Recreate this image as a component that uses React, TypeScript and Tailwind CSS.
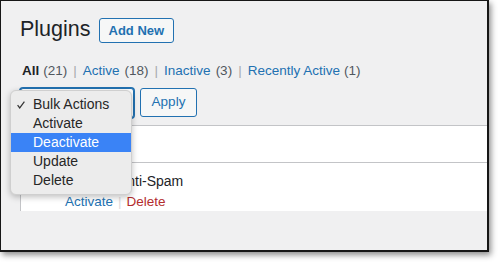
import React from 'react'

const menuItems = ['Bulk Actions', 'Activate', 'Deactivate', 'Update', 'Delete']

function Filters() {
  const sep = <span className="mx-[6px] text-[#a7aaad]">|</span>
  return (
    <div className="mt-[19px] ml-[2px] text-[13.5px] leading-[18px] text-[#50575e] whitespace-nowrap">
      <span className="font-bold text-[#1d2327]">All</span>
      <span className="ml-[4px]">(21)</span>
      {sep}
      <span className="text-[#2271b1]">Active</span>
      <span className="ml-[5px]">(18)</span>
      {sep}
      <span className="text-[#2271b1]">Inactive</span>
      <span className="ml-[5px]">(3)</span>
      {sep}
      <span className="text-[#2271b1]">Recently Active</span>
      <span className="ml-[4px]">(1)</span>
    </div>
  )
}

function BulkMenu() {
  return (
    <div className="absolute left-[9px] top-[88.5px] w-[122px] rounded-[6px] border border-[#cfcfcf] bg-[#ececec] pt-[4px] pb-[4px] shadow-[0_2px_6px_rgba(0,0,0,0.25)] text-[14px]">
      {menuItems.map((item, i) => {
        const active = item === 'Deactivate'
        return (
          <div
            key={item}
            className={`relative flex h-[19px] items-center pl-[22px] ${active ? 'bg-[#3a83f6] text-white' : 'text-[#262626]'}`}
          >
            {i === 0 && (
              <svg className="absolute left-[6px] top-[6.5px]" width="8" height="8" viewBox="0 0 8 8">
                <polyline points="0.6,4.2 2.7,6.9 7.4,0.6" fill="none" stroke="#333" strokeWidth="1.2" />
              </svg>
            )}
            {item}
          </div>
        )
      })}
    </div>
  )
}

export default function App() {
  return (
    <div className="w-[498px] h-[262px] bg-white font-['Liberation_Sans',Arial,sans-serif]">
      <div className="relative w-[489px] h-[252px] overflow-hidden border border-r-2 border-b-2 border-[#161616] bg-[#f0f0f1] pl-[19px] shadow-[2px_3px_6px_rgba(0,0,0,0.45)]">
        {/* title */}
        <div className="mt-[17px] flex h-[25px] items-center">
          <h1 className="-mt-[2px] text-[21.5px] leading-[25px] text-[#1d2327]">Plugins</h1>
          <button className="ml-[8px] h-[25px] rounded-[3px] border border-[#2271b1] bg-[#f6f7f7] px-[9px] text-[13px] font-semibold text-[#2271b1]">
            Add New
          </button>
        </div>

        <Filters />

        {/* bulk actions */}
        <div className="mt-[8px] flex h-[30px] gap-[6px]">
          <div className="h-[30px] w-[114px] rounded-[3px] border border-[#2271b1] bg-white shadow-[0_0_0_1px_#2271b1]" />
          <button className="h-[29px] w-[57px] rounded-[3px] border border-[#2271b1] bg-[#f6f7f7] text-[13.5px] text-[#2271b1]">
            Apply
          </button>
        </div>

        {/* table */}
        <div className="mt-[7px] border-t border-l border-[#c3c4c7] bg-white">
          <div className="h-[37px] border-b border-[#c3c4c7]" />
          <div className="pl-[44px] pt-[8px]">
            <div className="text-[14px] leading-[20px] text-[#1d2327]">Akismet Anti-Spam</div>
            <div className="mt-[1px] text-[13.5px] leading-[19px]">
              <span className="text-[#2271b1]">Activate</span>
              <span className="mx-[5px] text-[#dcdcde]">|</span>
              <span className="text-[#b32d2e]">Delete</span>
            </div>
          </div>
        </div>

        <BulkMenu />
      </div>
    </div>
  )
}
